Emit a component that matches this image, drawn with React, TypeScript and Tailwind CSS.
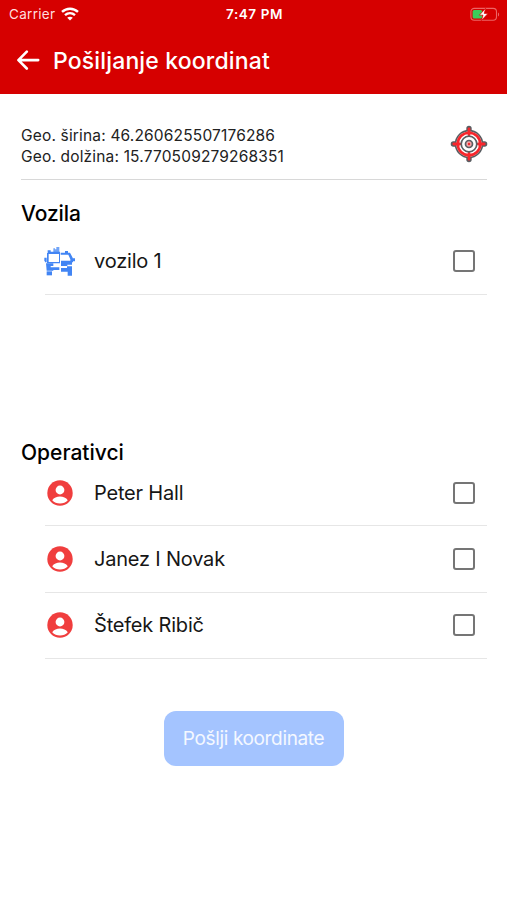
import { useState } from 'react'

interface Item {
  id: string
  name: string
}

const VEHICLES: Item[] = [{ id: 'v1', name: 'vozilo 1' }]

const OPERATIVES: Item[] = [
  { id: 'o1', name: 'Peter Hall' },
  { id: 'o2', name: 'Janez I Novak' },
  { id: 'o3', name: 'Štefek Ribič' },
]

function WifiIcon() {
  return (
    <svg width="18" height="14" viewBox="0 0 18 14" fill="none" stroke="#fff" strokeWidth="2.4">
      <path d="M1 4.9C5.6.6 12.4.6 17 4.9" />
      <path d="M4 8.2c2.9-2.6 7.1-2.6 10 0" />
      <path d="M9 13.6 6.2 10.8c1.6-1.4 4-1.4 5.6 0z" fill="#fff" stroke="none" />
    </svg>
  )
}

function BatteryIcon() {
  return (
    <svg width="30" height="15" viewBox="0 0 30 15">
      <rect x="0.9" y="1.4" width="25.6" height="11.8" rx="3.4" fill="none" stroke="#ec6464" strokeWidth="1.1" />
      <path d="M28 5.4c1.5.6 1.5 3.4 0 4z" fill="#ec6464" />
      <rect x="2.6" y="3" width="9.6" height="8.6" rx="1.6" fill="#3ccc5a" />
      <path d="M15.7 1.2 9.3 8.2h3.7l-1.6 5.4 6.6-7.2h-3.8z" fill="#fff" stroke="#d60000" strokeWidth="0.7" />
    </svg>
  )
}

function BackIcon() {
  return (
    <svg width="24" height="22" viewBox="0 0 24 22" fill="none" stroke="#fff" strokeWidth="2.6" strokeLinecap="round" strokeLinejoin="round">
      <path d="M10.8 1.7 2.4 10.1l8.4 8.4M2.8 10.1h19.4" />
    </svg>
  )
}

function TargetIcon() {
  return (
    <svg width="38" height="38" viewBox="0 0 38 38" fill="none">
      <g stroke="#5a5e62" strokeLinecap="round">
        <path d="M19 3.4v31.2M3.4 19h31.2" strokeWidth="5.4" />
        <circle cx="19" cy="19" r="12.8" strokeWidth="3" />
      </g>
      <circle cx="19" cy="19" r="12.6" fill="#fff" />
      <path d="M19 3.8v6M19 28.2v6M3.8 19h6M28.2 19h6" stroke="#f8262c" strokeWidth="2.8" strokeLinecap="round" />
      <circle cx="19" cy="19" r="11.3" stroke="#f8262c" strokeWidth="2.6" />
      <circle cx="19" cy="19" r="7.8" fill="#fff" stroke="#5a5e62" strokeWidth="1.7" />
      <circle cx="19" cy="19" r="3.5" fill="#f3a5a8" stroke="#5a5e62" strokeWidth="1.7" />
      <circle cx="19" cy="19" r="1.2" fill="#f8262c" />
    </svg>
  )
}

function TruckIcon() {
  return (
    <svg className="max-w-none shrink-0" width="32" height="31" viewBox="29 33 96 93" fill="#4285f4">
      <path d="M57 40h5v3h4v-7h9v16h-18z" opacity=".75" />
      <path d="M40 46h9v4h28v35H38V54h2zM43 57v24h31V57z" fillRule="evenodd" />
      <path d="M30 68h7v14h-5v-3h-2z" />
      <path d="M35 85h22v8h-8v4h26v8H57v2H37z" />
      <path d="M37 109h16v12H37z" />
      <path d="M79 53h13v-5h9v5h6l8 15v2h7v9h-6v3h-3v7h-14v4H80V77h28v-4l-6-14H79z" />
      <path d="M80 99h18v-5h15v28h-13v-12H80z" />
    </svg>
  )
}

function PersonIcon() {
  return (
    <svg width="26" height="26" viewBox="0 0 26 26">
      <circle cx="13" cy="13" r="12.7" fill="#f03e3e" />
      <circle cx="13" cy="10" r="4.4" fill="#fff" />
      <path d="M5.2 20.2c1.7-2.6 4.6-3.8 7.8-3.8s6.1 1.2 7.8 3.8c-2 2.1-4.8 3.2-7.8 3.2s-5.8-1.1-7.8-3.2z" fill="#fff" />
    </svg>
  )
}

function Row({ item, icon, checked, onToggle }: {
  item: Item
  icon: React.ReactNode
  checked: boolean
  onToggle: () => void
}) {
  return (
    <label className="ml-6 flex h-[66.3px] items-center border-b border-[#e6e6e6] pr-3">
      <span className="flex w-[30px] shrink-0 justify-center">{icon}</span>
      <span className="ml-[19px] flex-1 text-[20px] tracking-[-0.2px] text-[#161616]">{item.name}</span>
      <input
        type="checkbox"
        checked={checked}
        onChange={onToggle}
        className="size-[22px] shrink-0 appearance-none rounded-[3px] border-2 border-[#757575] checked:bg-[#4285f4]"
      />
    </label>
  )
}

export default function App() {
  const [selected, setSelected] = useState<string[]>([])

  const toggle = (id: string) =>
    setSelected(s => (s.includes(id) ? s.filter(x => x !== id) : [...s, id]))

  return (
    <div className="h-[900px] w-[507px] overflow-hidden bg-white font-['Inter',sans-serif] text-black">
      {/* Status bar + title */}
      <header className="h-[93.5px] bg-[#d60000] text-white">
        <div className="grid h-7 grid-cols-3 items-center pr-[7px] pl-[9px] text-[13px]">
          <div className="flex items-center gap-1.5 text-[#ffdede]">
            <span className="text-[13.5px] tracking-[0.3px]">Carrier</span>
            <WifiIcon />
          </div>
          <span className="text-center text-[13.5px] font-semibold tracking-[0.55px]">7:47 PM</span>
          <div className="flex justify-end"><BatteryIcon /></div>
        </div>
        <div className="flex h-[66px] items-center gap-[13px] pl-4">
          <BackIcon />
          <h1 className="text-[23px] font-medium tracking-[0.15px]">Pošiljanje koordinat</h1>
        </div>
      </header>

      <main className="pr-5 pl-[21px]">
        {/* Current position */}
        <section className="flex h-[86.5px] items-center justify-between border-b border-[#d8d8d8] pt-[15px]">
          <div className="pt-[5px] text-[15.5px] leading-[21px] tracking-[0.17px] text-[#222]">
            <p>Geo. širina: 46.260625507176286</p>
            <p>Geo. dolžina: 15.770509279268351</p>
          </div>
          <div className="-mr-px"><TargetIcon /></div>
        </section>

        <section className="h-[259px] pt-[18px]">
          <h2 className="h-[30.5px] text-[21px] leading-[31px] font-medium tracking-[-0.1px]">Vozila</h2>
          {VEHICLES.map(v => (
            <Row key={v.id} item={v} icon={<TruckIcon />} checked={selected.includes(v.id)} onToggle={() => toggle(v.id)} />
          ))}
        </section>

        <section>
          <h2 className="h-[21px] text-[21px] leading-[27px] font-medium">Operativci</h2>
          {OPERATIVES.map(o => (
            <Row key={o.id} item={o} icon={<PersonIcon />} checked={selected.includes(o.id)} onToggle={() => toggle(o.id)} />
          ))}
        </section>
      </main>

      <div className="mt-[52px] flex justify-center">
        <button className="h-[55px] w-[180px] rounded-xl bg-[#a4c4ff] pt-0.5 text-[19px] tracking-[-0.35px] text-[#f4f8ff]">
          Pošlji koordinate
        </button>
      </div>
    </div>
  )
}
